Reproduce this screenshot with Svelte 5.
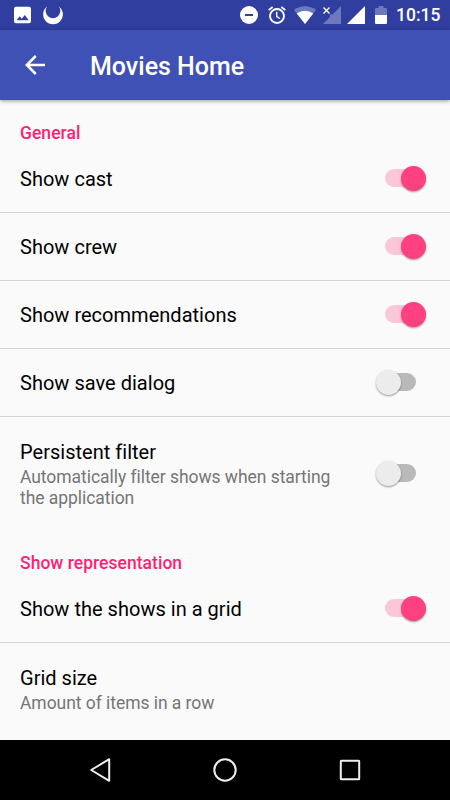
<script lang="ts">
	/**
	 * Movies Home: the preference screen for the movie overview.
	 */

	interface Preference {
		title: string;
		summary?: string;
		/** Leave out for preferences without a switch. */
		checked?: boolean;
	}

	interface Category {
		name: string;
		items: Preference[];
	}

	let categories: Category[] = $state([
		{
			name: 'General',
			items: [
				{ title: 'Show cast', checked: true },
				{ title: 'Show crew', checked: true },
				{ title: 'Show recommendations', checked: true },
				{ title: 'Show save dialog', checked: false },
				{
					title: 'Persistent filter',
					summary: 'Automatically filter shows when starting the application',
					checked: false
				}
			]
		},
		{
			name: 'Show representation',
			items: [
				{ title: 'Show the shows in a grid', checked: true },
				{ title: 'Grid size', summary: 'Amount of items in a row' }
			]
		}
	]);
</script>

<div class="screen">
	<div class="status">
		<svg class="picture" width="18" height="18" viewBox="0 0 18 18">
			<path fill="#fff" fill-rule="evenodd" d="M2 .8h13a2 2 0 0 1 2 2v12.400a2 2 0 0 1-2 2H2a2 2 0 0 1-2-2v-12.400a2 2 0 0 1 2-2zM2.700 14.200h12l-3.900-5.200-3 3.800-2.100-2.500z" />
		</svg>
		<svg class="moon" width="20" height="20" viewBox="0 0 20 20">
			<path fill="#fff" d="M4.200 1.400A9.900 9.900 0 1 0 15.800 1.400A7.300 7.300 0 1 1 4.200 1.400z" />
		</svg>
		<div class="system">
			<svg width="18" height="18" viewBox="0 0 18 18">
				<circle cx="9" cy="9" r="9" fill="#fff" />
				<path d="M5 9h8" stroke="#303f9f" stroke-width="2" />
			</svg>
			<svg class="alarm" width="18" height="18" viewBox="0 0 18 18" fill="none" stroke="#fff">
				<circle cx="9" cy="10" r="7" stroke-width="1.900" />
				<path d="M.7 4.200 4.600 1M17.300 4.200 13.400 1" stroke-width="1.700" />
				<path d="M8.700 5.800v4.700l3.300 2" stroke-width="1.400" />
			</svg>
			<svg class="wifi" width="22" height="18" viewBox="0 0 22 18">
				<path fill="#fff" fill-opacity=".3" d="M11 18 0 4.100a18 18 0 0 1 22 0z" />
				<path fill="#fff" d="M11 18 2.800 7.500a13.400 13.400 0 0 1 16.400 0z" />
			</svg>
			<svg class="nosim" width="19" height="18" viewBox="0 0 19 18">
				<path fill="#fff" fill-opacity=".3" d="M19 0v18H1L8 11V8.500h2.500z" />
				<path d="m1.500 1.500 6 6m0-6-6 6" stroke="#fff" stroke-width="1.300" />
			</svg>
			<svg class="signal" width="18" height="18" viewBox="0 0 18 18">
				<path fill="#fff" d="M18 0v18H0z" />
			</svg>
			<svg class="battery" width="12" height="18" viewBox="0 0 12 18">
				<path fill="#fff" fill-opacity=".3" d="M0 9V3q0-1 1-1h2.500V0h5v2H11q1 0 1 1v6z" />
				<path fill="#fff" d="M0 9h12v8q0 1-1 1H1q-1 0-1-1z" />
			</svg>
			<span class="time">10:15</span>
		</div>
	</div>

	<header>
		<button class="back" aria-label="Navigate up">
			<svg width="20" height="20" viewBox="0 0 20 20" fill="none" stroke="#fff" stroke-width="2.500">
				<path d="M20 10H2M10.800 1 1.800 10l9 9" />
			</svg>
		</button>
		<h1>Movies Home</h1>
	</header>

	<main>
		{#each categories as category}
			<section>
				<h2>{category.name}</h2>
				{#each category.items as item}
					<div class="row" class:detailed={item.summary}>
						<div class="text">
							<div class="title">{item.title}</div>
							{#if item.summary}
								<div class="summary">{item.summary}</div>
							{/if}
						</div>
						{#if item.checked !== undefined}
							<button
								class="switch"
								class:on={item.checked}
								role="switch"
								aria-checked={item.checked}
								aria-label={item.title}
								onclick={() => (item.checked = !item.checked)}
							>
								<span class="thumb"></span>
							</button>
						{/if}
					</div>
				{/each}
			</section>
		{/each}
	</main>

	<nav>
		<svg width="26" height="26" viewBox="-2 0 26 26">
			<path d="M19.200 2.200v21.600L1.200 13z" />
		</svg>
		<svg width="26" height="26" viewBox="0 0 26 26">
			<circle cx="13" cy="13" r="10.700" />
		</svg>
		<svg width="26" height="24" viewBox="-2 0 26 24">
			<rect x="2.800" y="2.800" width="18.400" height="18.400" rx=".5" />
		</svg>
	</nav>
</div>

<style>
	:global(body) {
		margin: 0;
	}

	.screen {
		display: flex;
		flex-direction: column;
		width: 450px;
		height: 800px;
		overflow: hidden;
		background: #fafafa;
		color: #000;
		font-family: Roboto, sans-serif;
	}

	svg {
		display: block;
		flex: none;
	}

	button {
		padding: 0;
		border: none;
		background: none;
		cursor: pointer;
	}

	.status {
		display: flex;
		align-items: center;
		flex: none;
		box-sizing: border-box;
		height: 30px;
		padding: 0 10px 0 14px;
		background: #303f9f;
	}
	.moon {
		margin-left: 10.500px;
	}
	.system {
		display: flex;
		align-items: center;
		margin-left: auto;
		color: #fff;
	}
	.alarm {
		margin-left: 10px;
	}
	.wifi {
		margin-left: 8px;
	}
	.nosim {
		margin-left: 6px;
	}
	.signal {
		margin-left: 6px;
	}
	.battery {
		margin-left: 10px;
	}
	.time {
		width: 44px;
		margin-left: 9px;
		padding-top: 1px;
		font-size: 17.500px;
		font-weight: 500;
		line-height: 29px;
		white-space: nowrap;
	}

	header {
		display: flex;
		align-items: center;
		flex: none;
		height: 70px;
		padding-left: 25px;
		background: #3f51b5;
		box-shadow: 0 1px 4px rgba(0, 0, 0, 0.4);
		color: #fff;
	}
	h1 {
		margin: 3px 0 0 45px;
		font-size: 25px;
		font-weight: 500;
		line-height: 30px;
	}

	main {
		flex: 1;
		overflow: hidden;
	}
	h2 {
		margin: 0;
		padding: 21px 20px 0;
		color: #ff1f75;
		font-size: 17.500px;
		font-weight: 500;
		letter-spacing: 0.03px;
		line-height: 24px;
	}

	.row {
		display: flex;
		align-items: center;
		box-sizing: border-box;
		min-height: 68px;
		padding: 1px 24px 0 20px;
		border-bottom: 1px solid #d6d6d6;
	}
	.row:last-child {
		border-bottom: none;
	}
	.detailed {
		padding-top: 23px;
		padding-bottom: 22px;
	}
	.text {
		flex: 1;
		max-width: 325px;
	}
	.title {
		font-size: 20px;
		letter-spacing: 0.02px;
		line-height: 24px;
	}
	.summary {
		padding-top: 3px;
		color: #757575;
		font-size: 17.500px;
		letter-spacing: -0.05px;
		line-height: 20.500px;
	}

	.switch {
		display: flex;
		align-items: center;
		flex: none;
		box-sizing: border-box;
		width: 31px;
		height: 18px;
		margin: 0 10px 2px auto;
		border-radius: 9px;
		background: #b9b9b9;
	}
	.thumb {
		flex: none;
		width: 25px;
		height: 25px;
		margin-left: -9.500px;
		border-radius: 50%;
		background: #ececec;
		box-shadow: 0 1px 2px rgba(0, 0, 0, 0.4);
	}
	.switch.on {
		background: #fbc6d8;
	}
	.on .thumb {
		margin-left: 15.500px;
		background: #ff4081;
	}

	nav {
		display: flex;
		align-items: center;
		justify-content: space-between;
		flex: none;
		height: 60px;
		padding: 0 88px;
		background: #000;
	}
	nav svg {
		fill: none;
		stroke: #eee;
		stroke-width: 2;
		stroke-linejoin: round;
	}
</style>
